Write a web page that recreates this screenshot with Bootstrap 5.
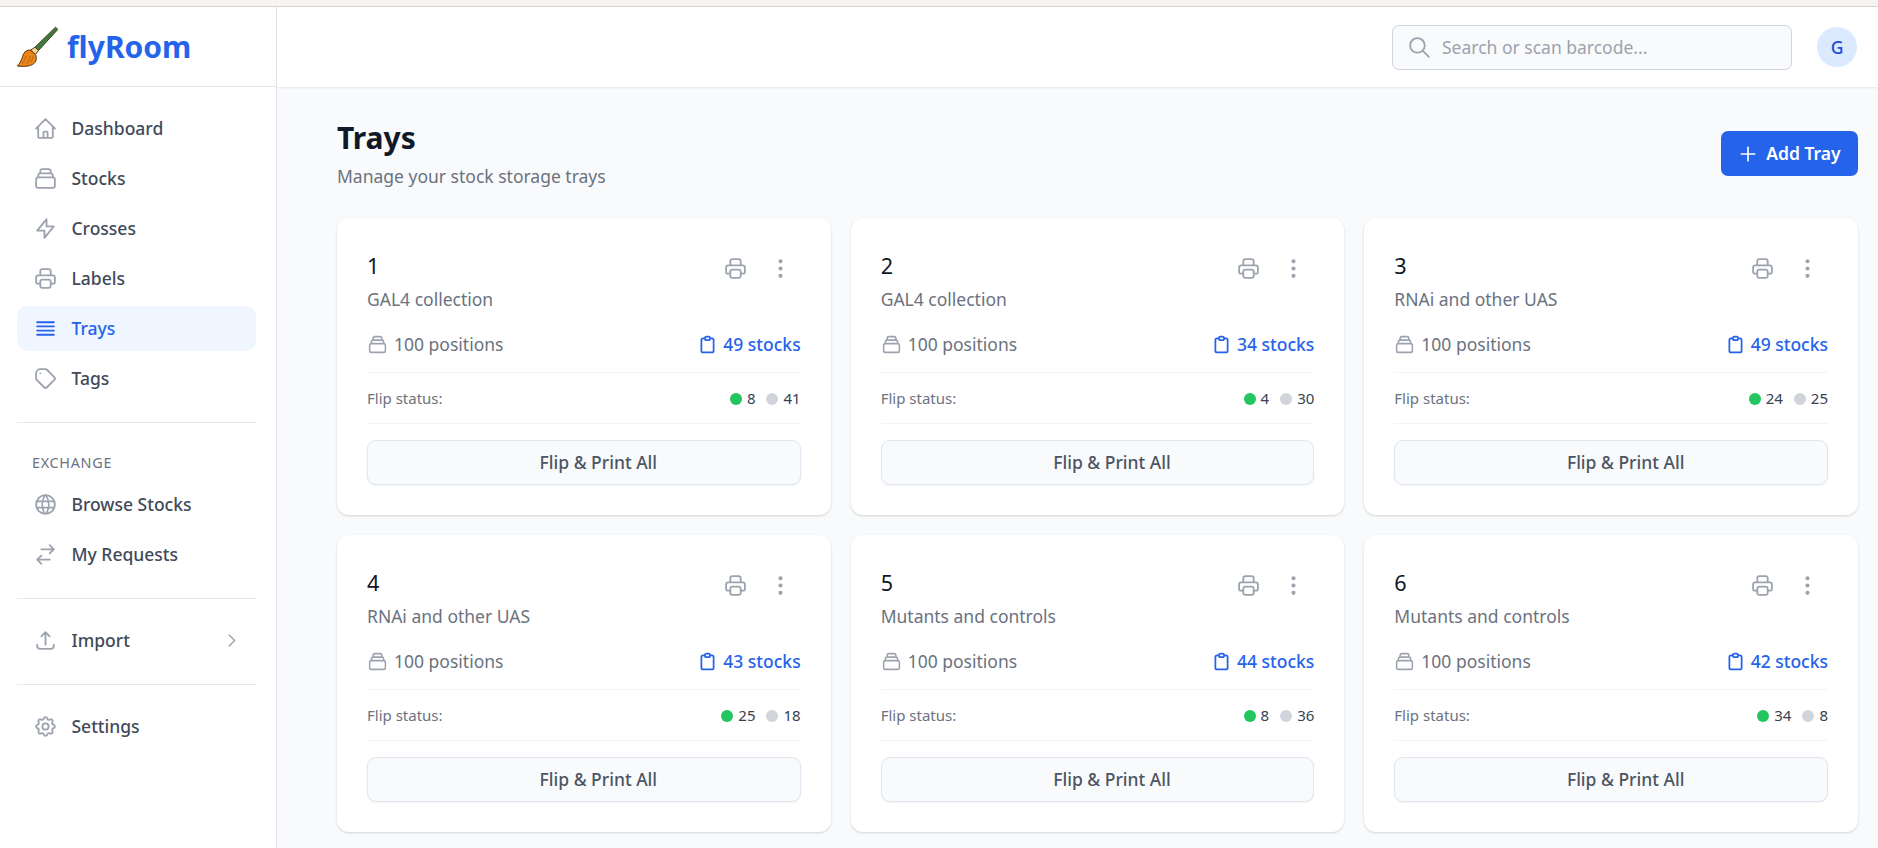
<!DOCTYPE html>
<html lang="en">
<head>
<meta charset="utf-8">
<title>flyRoom - Trays</title>
<link href="https://cdn.jsdelivr.net/npm/bootstrap@5.3.0/dist/css/bootstrap.min.css" rel="stylesheet">
<style>
html,body{height:100%;overflow:hidden}
body{font-family:"Noto Sans",sans-serif;background:#f9fafb;color:#111827;font-size:17.5px;border-top:6px solid #f5f4f2}
.shell{height:842px;border-top:1px solid #d9d5d0}
.side{width:277px;flex:none;background:#fff;border-right:1px solid #e5e7eb}
.brandbar{height:80px;border-bottom:1px solid #e5e7eb;padding-left:17px;gap:9px}
.brandname{font-size:30px;font-weight:700;color:#2563eb;line-height:1}
.sidenav{padding:19px 20px 0 17px}
.navit{height:45px;margin-bottom:5px;padding:0 15.500px;gap:14px;color:#3f4a5a;border-radius:10px;text-decoration:none;font-weight:500;font-size:17.5px}
.navit svg{width:25px;height:25px;color:#9ca3af;flex:none}
.navit.on{background:#eff6ff;color:#2563eb}
.navit.on svg{color:#2563eb}
.sep{height:1px;background:#e5e7eb;margin:21px 0 19px}
.grouplbl{font-size:14.4px;font-weight:400;color:#6b7280;letter-spacing:.7px;padding:0 15px;line-height:20px;margin:30px 0 9px}
.chev{margin-left:auto;width:19px!important;height:19px!important}
.topbar{height:80px;background:#fff;box-shadow:0 1px 2px rgba(0,0,0,.08);padding-right:21px;gap:25px;flex:none}
.searchbox{width:400px;height:45px;background:#f9fafb;border:1px solid #d1d5db;border-radius:7px;padding-left:14px;gap:8px;color:#9ca3af}
.searchbox svg{width:25px;height:25px}
.searchbox input{border:0;background:transparent;outline:0;flex:1;font:inherit;color:#374151}
.searchbox input::placeholder{color:#9ca3af;opacity:1}
.avatar{width:40px;height:40px;border-radius:50%;background:#dbeafe;color:#1d4ed8;font-weight:500;font-size:17.5px}
.content{padding:32px 20px 0 60px}
.pagehead{margin-bottom:30px}
.pagetitle{font-size:30px;font-weight:700;line-height:38px;margin:0;color:#111827}
.pagesub{font-size:17.5px;line-height:24px;color:#6b7280;margin:7px 0 0}
.addbtn{background:#2563eb;border:0;color:#fff;font-weight:600;font-size:17.5px;height:45px;width:137px;border-radius:7px;gap:8px;margin-top:12px}
.addbtn svg{width:20px;height:20px}
.trays{display:grid;grid-template-columns:repeat(3,1fr);gap:20px 20px}
.traycard{height:297px;border:0;border-radius:12px;box-shadow:0 1px 3px rgba(0,0,0,.1),0 1px 2px rgba(0,0,0,.06);padding:30px}
.trayname{font-size:21.6px;line-height:36px;color:#111827;margin:0}
.traydesc{font-size:17.5px;line-height:24px;color:#6b7280;margin:3px 0 0}
.acts{gap:20px;color:#9ca3af;margin-top:8px;padding-right:8px}
.acts svg{width:25px;height:25px}
.metaline{margin-top:19px;height:42px;font-size:17.5px;color:#6b7280;padding-bottom:14px}
.metaline svg{width:21px;height:21px;color:#9ca3af;margin-right:6px}
.stocklink{color:#2563eb;text-decoration:none;font-weight:500}
.stocklink svg{color:#2563eb;margin-right:5px}
.fliprow{height:52px;border-top:1px solid #f3f4f6;border-bottom:1px solid #f3f4f6;font-size:15px;color:#6b7280}
.counts{color:#374151;gap:11px}
.dotg,.dotx{display:inline-block;width:12px;height:12px;border-radius:50%;margin-right:5px;vertical-align:-1px}
.dotg{background:#22c55e}
.dotx{background:#d1d5db}
.flipbtn{margin-top:16px;height:45px;width:100%;padding-left:35px;background:#f9fafb;border:1px solid #dfe6f0;border-radius:9px;color:#4b5563;font-weight:500;font-size:17.5px;box-shadow:0 1px 2px rgba(0,0,0,.05)}
</style>
</head>
<body>
<svg width="0" height="0" class="position-absolute" aria-hidden="true">
<defs>
<symbol id="i-home" viewBox="0 0 24 24"><path fill="none" stroke="currentColor" stroke-width="1.75" stroke-linecap="round" stroke-linejoin="round" d="M3 12l2-2m0 0l7-7 7 7M5 10v10a1 1 0 001 1h3m10-11l2 2m-2-2v10a1 1 0 01-1 1h-3m-6 0a1 1 0 001-1v-4a1 1 0 011-1h2a1 1 0 011 1v4a1 1 0 001 1m-6 0h6"/></symbol>
<symbol id="i-coll" viewBox="0 0 24 24"><path fill="none" stroke="currentColor" stroke-width="1.75" stroke-linecap="round" stroke-linejoin="round" d="M19 11H5m14 0a2 2 0 012 2v6a2 2 0 01-2 2H5a2 2 0 01-2-2v-6a2 2 0 012-2m14 0V9a2 2 0 00-2-2M5 11V9a2 2 0 012-2m0 0V5a2 2 0 012-2h6a2 2 0 012 2v2M7 7h10"/></symbol>
<symbol id="i-bolt" viewBox="0 0 24 24"><path fill="none" stroke="currentColor" stroke-width="1.75" stroke-linecap="round" stroke-linejoin="round" d="M13 10V3L4 14h7v7l9-11h-7z"/></symbol>
<symbol id="i-print" viewBox="0 0 24 24"><path fill="none" stroke="currentColor" stroke-width="1.75" stroke-linecap="round" stroke-linejoin="round" d="M17 17h2a2 2 0 002-2v-4a2 2 0 00-2-2H5a2 2 0 00-2 2v4a2 2 0 002 2h2m2 4h6a2 2 0 002-2v-4a2 2 0 00-2-2H9a2 2 0 00-2 2v4a2 2 0 002 2zm8-12V5a2 2 0 00-2-2H9a2 2 0 00-2 2v4h10z"/></symbol>
<symbol id="i-bars" viewBox="0 0 24 24"><path fill="none" stroke="currentColor" stroke-width="1.75" stroke-linecap="round" stroke-linejoin="round" d="M4 6h16M4 10h16M4 14h16M4 18h16"/></symbol>
<symbol id="i-tag" viewBox="0 0 24 24"><path fill="none" stroke="currentColor" stroke-width="1.75" stroke-linecap="round" stroke-linejoin="round" d="M7 7h.01M7 3h5c.512 0 1.024.195 1.414.586l7 7a2 2 0 010 2.828l-7 7a2 2 0 01-2.828 0l-7-7A1.994 1.994 0 013 12V7a4 4 0 014-4z"/></symbol>
<symbol id="i-globe" viewBox="0 0 24 24"><path fill="none" stroke="currentColor" stroke-width="1.75" stroke-linecap="round" stroke-linejoin="round" d="M21 12a9 9 0 11-18 0 9 9 0 0118 0zM3.600 9h16.800M3.600 15h16.800M11.500 3a17 17 0 000 18M12.500 3a17 17 0 010 18"/></symbol>
<symbol id="i-swap" viewBox="0 0 24 24"><path fill="none" stroke="currentColor" stroke-width="1.75" stroke-linecap="round" stroke-linejoin="round" d="M8 7h12m0 0l-4-4m4 4l-4 4m0 6H4m0 0l4 4m-4-4l4-4"/></symbol>
<symbol id="i-up" viewBox="0 0 24 24"><path fill="none" stroke="currentColor" stroke-width="1.75" stroke-linecap="round" stroke-linejoin="round" d="M4 16v1a3 3 0 003 3h10a3 3 0 003-3v-1m-4-8l-4-4m0 0L8 8m4-4v12"/></symbol>
<symbol id="i-chev" viewBox="0 0 24 24"><path fill="none" stroke="currentColor" stroke-width="1.75" stroke-linecap="round" stroke-linejoin="round" d="M9 5l7 7-7 7"/></symbol>
<symbol id="i-cog" viewBox="0 0 24 24"><path fill="none" stroke="currentColor" stroke-width="1.75" stroke-linecap="round" stroke-linejoin="round" d="M10.325 4.317c.426-1.756 2.924-1.756 3.35 0a1.724 1.724 0 002.573 1.066c1.543-.94 3.31.826 2.37 2.37a1.724 1.724 0 001.065 2.572c1.756.426 1.756 2.924 0 3.35a1.724 1.724 0 00-1.066 2.573c.94 1.543-.826 3.31-2.37 2.37a1.724 1.724 0 00-2.572 1.065c-.426 1.756-2.924 1.756-3.35 0a1.724 1.724 0 00-2.573-1.066c-1.543.94-3.31-.826-2.37-2.37a1.724 1.724 0 00-1.065-2.572c-1.756-.426-1.756-2.924 0-3.35a1.724 1.724 0 001.066-2.573c-.94-1.543.826-3.31 2.37-2.37.996.608 2.296.07 2.572-1.065zM15 12a3 3 0 11-6 0 3 3 0 016 0z"/></symbol>
<symbol id="i-clip" viewBox="0 0 24 24"><path fill="none" stroke="currentColor" stroke-width="2" stroke-linecap="round" stroke-linejoin="round" d="M9 5H7a2 2 0 00-2 2v12a2 2 0 002 2h10a2 2 0 002-2V7a2 2 0 00-2-2h-2M9 5a2 2 0 002 2h2a2 2 0 002-2M9 5a2 2 0 012-2h2a2 2 0 012 2"/></symbol>
<symbol id="i-search" viewBox="0 0 24 24"><path fill="none" stroke="currentColor" stroke-width="1.75" stroke-linecap="round" stroke-linejoin="round" d="M21 21l-6-6m2-5a7 7 0 11-14 0 7 7 0 0114 0z"/></symbol>
<symbol id="i-plus" viewBox="0 0 24 24"><path fill="none" stroke="currentColor" stroke-width="2" stroke-linecap="round" stroke-linejoin="round" d="M12 4v16m8-8H4"/></symbol>
<symbol id="i-dots" viewBox="0 0 24 24"><path fill="currentColor" d="M12 7a2 2 0 110-4 2 2 0 010 4zm0 7a2 2 0 110-4 2 2 0 010 4zm0 7a2 2 0 110-4 2 2 0 010 4z"/></symbol>
</defs>
</svg>
<div class="shell d-flex">
  <aside class="side d-flex flex-column">
    <div class="brandbar d-flex align-items-center">
      <svg width="41" height="42" viewBox="0 0 41 42" aria-hidden="true">
        <path d="M38.500 1.200l2.300 2.200-19.300 21.100-3.500-3.300z" fill="#3a7d3a" stroke="#4a3a20" stroke-width="1" stroke-linejoin="round"/>
        <path d="M18 21.200l3.500 3.300-3 4-5-4.300z" fill="#f2d596" stroke="#5b3a12" stroke-width="1" stroke-linejoin="round"/>
        <path d="M13.500 24.200c-3-.5-5.500 1-6.800 3.500-1.500 2.800-2 8-6.400 12.300 3.500.5 7 .5 10.700 0 4.500-.8 8-3.500 8-6 .5-1.800.3-4 -.5-5.500z" fill="#e8861a" stroke="#5b3208" stroke-width="1" stroke-linejoin="round"/>
        <path d="M9 30c-.5 3-2 6-4 8M13 30c-.3 3-1.500 5.500-3.500 8M16 29.500c0 2.500-.8 4.500-2.500 6.500" fill="none" stroke="#b25f0c" stroke-width=".8"/>
      </svg>
      <span class="brandname">flyRoom</span>
    </div>
    <nav class="sidenav">
      <a class="navit d-flex align-items-center" href="#"><svg><use href="#i-home"/></svg>Dashboard</a>
      <a class="navit d-flex align-items-center" href="#"><svg><use href="#i-coll"/></svg>Stocks</a>
      <a class="navit d-flex align-items-center" href="#"><svg><use href="#i-bolt"/></svg>Crosses</a>
      <a class="navit d-flex align-items-center" href="#"><svg><use href="#i-print"/></svg>Labels</a>
      <a class="navit on d-flex align-items-center" href="#"><svg><use href="#i-bars"/></svg>Trays</a>
      <a class="navit d-flex align-items-center" href="#"><svg><use href="#i-tag"/></svg>Tags</a>
      <div class="sep"></div>
      <div class="grouplbl">EXCHANGE</div>
      <a class="navit d-flex align-items-center" href="#"><svg><use href="#i-globe"/></svg>Browse Stocks</a>
      <a class="navit d-flex align-items-center" href="#"><svg><use href="#i-swap"/></svg>My Requests</a>
      <div class="sep"></div>
      <a class="navit d-flex align-items-center" href="#"><svg><use href="#i-up"/></svg>Import<svg class="chev"><use href="#i-chev"/></svg></a>
      <div class="sep"></div>
      <a class="navit d-flex align-items-center" href="#"><svg><use href="#i-cog"/></svg>Settings</a>
    </nav>
  </aside>
  <div class="flex-grow-1 d-flex flex-column min-w-0">
    <header class="topbar d-flex align-items-center justify-content-end">
      <div class="searchbox d-flex align-items-center"><svg><use href="#i-search"/></svg><input type="text" placeholder="Search or scan barcode..."></div>
      <div class="avatar d-flex align-items-center justify-content-center">G</div>
    </header>
    <main class="content">
      <div class="pagehead d-flex justify-content-between align-items-start">
        <div><h1 class="pagetitle">Trays</h1><p class="pagesub">Manage your stock storage trays</p></div>
        <button class="addbtn d-flex align-items-center justify-content-center" type="button"><svg><use href="#i-plus"/></svg>Add Tray</button>
      </div>
      <div class="trays">
        <div class="card traycard">
          <div class="d-flex justify-content-between align-items-start"><div><p class="trayname">1</p><p class="traydesc">GAL4 collection</p></div><div class="acts d-flex"><svg><use href="#i-print"/></svg><svg><use href="#i-dots"/></svg></div></div>
          <div class="metaline d-flex justify-content-between align-items-center"><span class="d-flex align-items-center"><svg><use href="#i-coll"/></svg>100 positions</span><a class="stocklink d-flex align-items-center" href="#"><svg><use href="#i-clip"/></svg>49 stocks</a></div>
          <div class="fliprow d-flex justify-content-between align-items-center"><span>Flip status:</span><span class="counts d-flex"><span><i class="dotg"></i>8</span><span><i class="dotx"></i>41</span></span></div>
          <button class="flipbtn" type="button">Flip &amp; Print All</button>
        </div>
        <div class="card traycard">
          <div class="d-flex justify-content-between align-items-start"><div><p class="trayname">2</p><p class="traydesc">GAL4 collection</p></div><div class="acts d-flex"><svg><use href="#i-print"/></svg><svg><use href="#i-dots"/></svg></div></div>
          <div class="metaline d-flex justify-content-between align-items-center"><span class="d-flex align-items-center"><svg><use href="#i-coll"/></svg>100 positions</span><a class="stocklink d-flex align-items-center" href="#"><svg><use href="#i-clip"/></svg>34 stocks</a></div>
          <div class="fliprow d-flex justify-content-between align-items-center"><span>Flip status:</span><span class="counts d-flex"><span><i class="dotg"></i>4</span><span><i class="dotx"></i>30</span></span></div>
          <button class="flipbtn" type="button">Flip &amp; Print All</button>
        </div>
        <div class="card traycard">
          <div class="d-flex justify-content-between align-items-start"><div><p class="trayname">3</p><p class="traydesc">RNAi and other UAS</p></div><div class="acts d-flex"><svg><use href="#i-print"/></svg><svg><use href="#i-dots"/></svg></div></div>
          <div class="metaline d-flex justify-content-between align-items-center"><span class="d-flex align-items-center"><svg><use href="#i-coll"/></svg>100 positions</span><a class="stocklink d-flex align-items-center" href="#"><svg><use href="#i-clip"/></svg>49 stocks</a></div>
          <div class="fliprow d-flex justify-content-between align-items-center"><span>Flip status:</span><span class="counts d-flex"><span><i class="dotg"></i>24</span><span><i class="dotx"></i>25</span></span></div>
          <button class="flipbtn" type="button">Flip &amp; Print All</button>
        </div>
        <div class="card traycard">
          <div class="d-flex justify-content-between align-items-start"><div><p class="trayname">4</p><p class="traydesc">RNAi and other UAS</p></div><div class="acts d-flex"><svg><use href="#i-print"/></svg><svg><use href="#i-dots"/></svg></div></div>
          <div class="metaline d-flex justify-content-between align-items-center"><span class="d-flex align-items-center"><svg><use href="#i-coll"/></svg>100 positions</span><a class="stocklink d-flex align-items-center" href="#"><svg><use href="#i-clip"/></svg>43 stocks</a></div>
          <div class="fliprow d-flex justify-content-between align-items-center"><span>Flip status:</span><span class="counts d-flex"><span><i class="dotg"></i>25</span><span><i class="dotx"></i>18</span></span></div>
          <button class="flipbtn" type="button">Flip &amp; Print All</button>
        </div>
        <div class="card traycard">
          <div class="d-flex justify-content-between align-items-start"><div><p class="trayname">5</p><p class="traydesc">Mutants and controls</p></div><div class="acts d-flex"><svg><use href="#i-print"/></svg><svg><use href="#i-dots"/></svg></div></div>
          <div class="metaline d-flex justify-content-between align-items-center"><span class="d-flex align-items-center"><svg><use href="#i-coll"/></svg>100 positions</span><a class="stocklink d-flex align-items-center" href="#"><svg><use href="#i-clip"/></svg>44 stocks</a></div>
          <div class="fliprow d-flex justify-content-between align-items-center"><span>Flip status:</span><span class="counts d-flex"><span><i class="dotg"></i>8</span><span><i class="dotx"></i>36</span></span></div>
          <button class="flipbtn" type="button">Flip &amp; Print All</button>
        </div>
        <div class="card traycard">
          <div class="d-flex justify-content-between align-items-start"><div><p class="trayname">6</p><p class="traydesc">Mutants and controls</p></div><div class="acts d-flex"><svg><use href="#i-print"/></svg><svg><use href="#i-dots"/></svg></div></div>
          <div class="metaline d-flex justify-content-between align-items-center"><span class="d-flex align-items-center"><svg><use href="#i-coll"/></svg>100 positions</span><a class="stocklink d-flex align-items-center" href="#"><svg><use href="#i-clip"/></svg>42 stocks</a></div>
          <div class="fliprow d-flex justify-content-between align-items-center"><span>Flip status:</span><span class="counts d-flex"><span><i class="dotg"></i>34</span><span><i class="dotx"></i>8</span></span></div>
          <button class="flipbtn" type="button">Flip &amp; Print All</button>
        </div>
      </div>
    </main>
  </div>
</div>
<script src="https://cdn.jsdelivr.net/npm/bootstrap@5.3.0/dist/js/bootstrap.bundle.min.js"></script>
</body>
</html>
